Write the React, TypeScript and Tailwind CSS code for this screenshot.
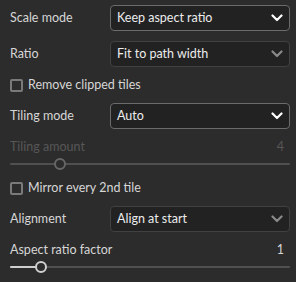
import React from "react";

const font = { fontFamily: 'Lato, "Noto Sans", sans-serif' };

function Chevron({ dim = false }: { dim?: boolean }) {
  return (
    <svg width="12" height="8" viewBox="0 0 12 8" className={dim ? "text-[#8a8a8a]" : "text-white"}>
      <path d="M1.5 1.5 L6 6 L10.5 1.5" fill="none" stroke="currentColor" strokeWidth={2.2} strokeLinecap="round" strokeLinejoin="round" />
    </svg>
  );
}

function SelectRow({ label, value, active = false }: { label: string; value: string; active?: boolean }) {
  return (
    <div className="flex items-center h-[26px]">
      <span className="w-[100px] text-[12.5px] text-[#d6d6d6]">{label}</span>
      <div
        className={`flex-1 h-full flex items-center justify-between pl-[6px] pr-[6px] rounded-[4px] border bg-[#222222] ${
          active ? "border-[#6b6b6b]" : "border-[#414141]"
        }`}
      >
        <span className="text-[12.5px] text-[#ececec]">{value}</span>
        <Chevron dim={!active} />
      </div>
    </div>
  );
}

function Checkbox({ label }: { label: string }) {
  return (
    <div className="flex items-center h-[16px] gap-[5px]">
      <div className="w-[13px] h-[13px] rounded-[2px] border-2 border-[#7a7a7a]" />
      <span className="text-[12.5px] text-[#d6d6d6]">{label}</span>
    </div>
  );
}

function Slider({ label, value, pos, disabled = false }: { label: string; value: string; pos: number; disabled?: boolean }) {
  return (
    <div className="flex flex-col">
      <div className={`flex items-center justify-between h-[16px] pr-[6px] text-[12.5px] ${disabled ? "text-[#575757]" : "text-[#d6d6d6]"}`}>
        <span>{label}</span>
        <span>{value}</span>
      </div>
      <div className="relative h-[12px] mt-[3px]">
        <div className="absolute left-0 right-0 top-[5px] h-[2px] bg-[#505050] rounded-full" />
        {!disabled && (
          <div className="absolute left-0 top-[5px] h-[2px] bg-[#cfcfcf] rounded-full" style={{ width: pos }} />
        )}
        <div
          className={`absolute top-0 w-[12px] h-[12px] rounded-full border-2 bg-[#2c2c2c] ${
            disabled ? "border-[#666666]" : "border-[#d0d0d0]"
          }`}
          style={{ left: pos - 6 }}
        />
      </div>
    </div>
  );
}

export default function App() {
  return (
    <div className="w-[296px] h-[282px] bg-[#2c2c2c] pl-[10px] pr-[6px] pt-[5px] flex flex-col gap-[10px]" style={font}>
      <SelectRow label="Scale mode" value="Keep aspect ratio" active />
      <SelectRow label="Ratio" value="Fit to path width" />
      <Checkbox label="Remove clipped tiles" />
      <SelectRow label="Tiling mode" value="Auto" active />
      <Slider label="Tiling amount" value="4" pos={50} disabled />
      <Checkbox label="Mirror every 2nd tile" />
      <SelectRow label="Alignment" value="Align at start" />
      <Slider label="Aspect ratio factor" value="1" pos={31} />
    </div>
  );
}
